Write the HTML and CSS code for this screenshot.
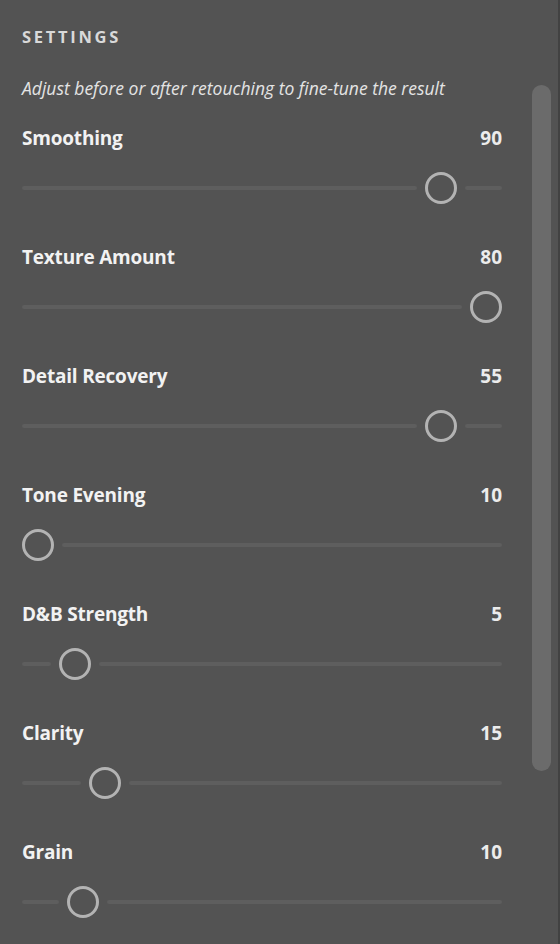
FILE: index.html
```html
<!DOCTYPE html>
<html lang="en">
<head>
<meta charset="utf-8">
<title>Settings</title>
<link rel="stylesheet" href="styles.css">
</head>
<body>
<div class="panel">
  <div class="content">
    <h2 class="title">SETTINGS</h2>
    <p class="hint">Adjust before or after retouching to fine-tune the result</p>

    <div class="row">
      <div class="row-head"><span class="label">Smoothing</span><span class="value">90</span></div>
      <div class="slider">
        <span class="track" style="flex-basis:395px"></span>
        <span class="thumb"></span>
        <span class="track grow"></span>
      </div>
    </div>

    <div class="row">
      <div class="row-head"><span class="label">Texture Amount</span><span class="value">80</span></div>
      <div class="slider">
        <span class="track" style="flex-basis:440px"></span>
        <span class="thumb"></span>
      </div>
    </div>

    <div class="row">
      <div class="row-head"><span class="label">Detail Recovery</span><span class="value">55</span></div>
      <div class="slider">
        <span class="track" style="flex-basis:395px"></span>
        <span class="thumb"></span>
        <span class="track grow"></span>
      </div>
    </div>

    <div class="row">
      <div class="row-head"><span class="label">Tone Evening</span><span class="value">10</span></div>
      <div class="slider">
        <span class="thumb"></span>
        <span class="track grow"></span>
      </div>
    </div>

    <div class="row">
      <div class="row-head"><span class="label">D&amp;B Strength</span><span class="value">5</span></div>
      <div class="slider">
        <span class="track" style="flex-basis:29px"></span>
        <span class="thumb"></span>
        <span class="track grow"></span>
      </div>
    </div>

    <div class="row">
      <div class="row-head"><span class="label">Clarity</span><span class="value">15</span></div>
      <div class="slider">
        <span class="track" style="flex-basis:59px"></span>
        <span class="thumb"></span>
        <span class="track grow"></span>
      </div>
    </div>

    <div class="row">
      <div class="row-head"><span class="label">Grain</span><span class="value">10</span></div>
      <div class="slider">
        <span class="track" style="flex-basis:37px"></span>
        <span class="thumb"></span>
        <span class="track grow"></span>
      </div>
    </div>
  </div>
  <div class="scrollbar"><div class="scroll-thumb"></div></div>
</div>
</body>
</html>
```

FILE: styles.css
```css
* { box-sizing: border-box; }
html, body { margin: 0; padding: 0; background: #535353; }
body { font-family: "Open Sans", "Liberation Sans", sans-serif; }

.panel {
  position: relative;
  width: 560px;
  height: 944px;
  overflow: hidden;
  background: #535353;
  border-right: 2px solid #424242;
}

.content {
  padding: 25px 56px 0 22px;
}

.title {
  margin: 0;
  font-size: 16.5px;
  line-height: 24px;
  font-weight: 700;
  letter-spacing: 2.7px;
  color: #d9d9d9;
}

.hint {
  margin: 27px 0 0;
  font-size: 17.5px;
  line-height: 24px;
  font-style: italic;
  color: #e4e4e4;
}

.row {
  height: 119px;
}
.row:first-of-type { margin-top: 25px; }

.row-head {
  display: flex;
  justify-content: space-between;
  align-items: baseline;
  height: 26px;
  line-height: 26px;
}

.label {
  font-size: 19px;
  font-weight: 700;
  letter-spacing: -0.2px;
  color: #f2f2f2;
}

.value {
  font-size: 19px;
  font-weight: 700;
  color: #ececec;
}

.slider {
  display: flex;
  align-items: center;
  gap: 8px;
  height: 32px;
  margin-top: 21px;
}

.track {
  flex: 0 0 auto;
  height: 4px;
  border-radius: 2px;
  background: #5e5e5e;
}
.track.grow { flex: 1 1 0; }

.thumb {
  flex: 0 0 32px;
  width: 32px;
  height: 32px;
  border-radius: 50%;
  border: 3px solid #b3b3b3;
}

.scrollbar {
  position: absolute;
  top: 85px;
  right: 7px;
  width: 19px;
  height: 686px;
}
.scroll-thumb {
  height: 100%;
  border-radius: 10px;
  background: #6b6b6b;
}
```
